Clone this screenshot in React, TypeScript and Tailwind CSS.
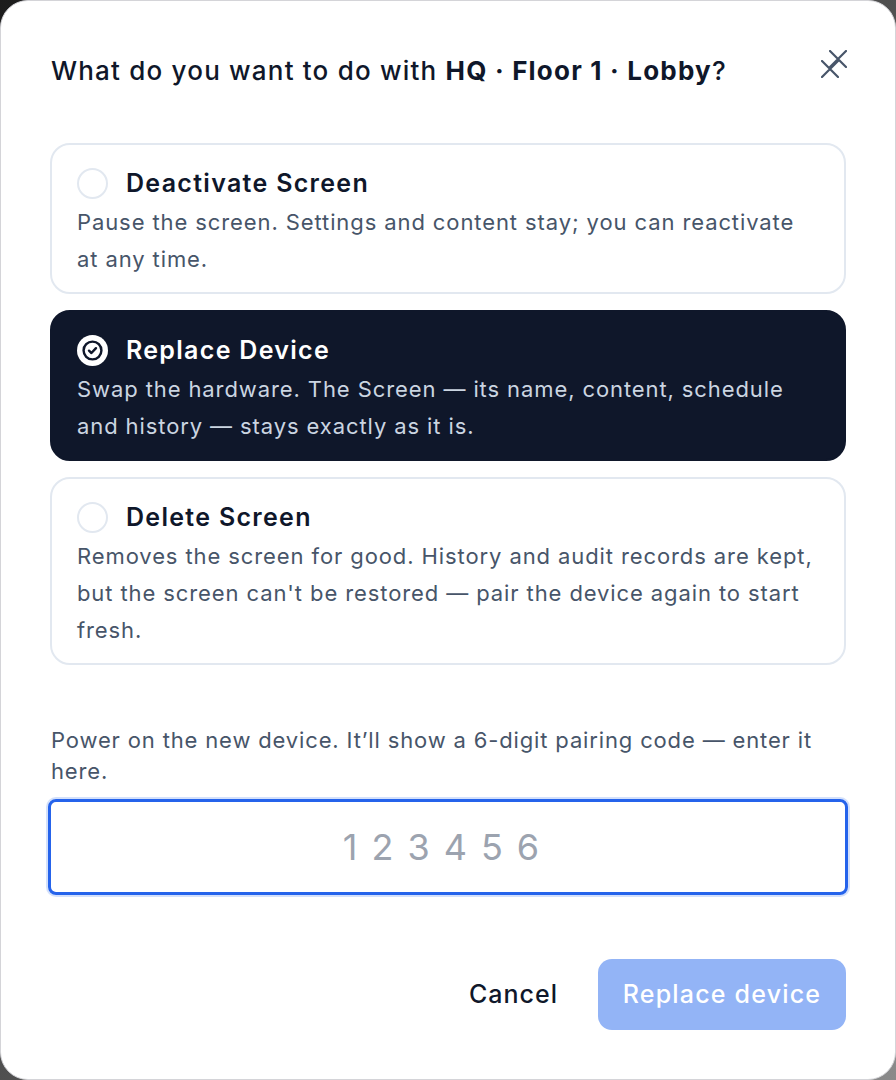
import { useState } from "react";

type Option = {
  id: string;
  title: string;
  description: string;
};

const options: Option[] = [
  {
    id: "deactivate",
    title: "Deactivate Screen",
    description:
      "Pause the screen. Settings and content stay; you can reactivate at any time.",
  },
  {
    id: "replace",
    title: "Replace Device",
    description:
      "Swap the hardware. The Screen — its name, content, schedule and history — stays exactly as it is.",
  },
  {
    id: "delete",
    title: "Delete Screen",
    description:
      "Removes the screen for good. History and audit records are kept, but the screen can't be restored — pair the device again to start fresh.",
  },
];

function CloseX({ className }: { className: string }) {
  return (
    <svg
      viewBox="0 0 18 18"
      className={className}
      fill="none"
      stroke="#475569"
      strokeWidth={2.2}
      strokeLinecap="round"
    >
      <path d="M1 1 17 17M17 1 1 17" />
    </svg>
  );
}

function CheckedRadio() {
  return (
    <svg viewBox="0 0 32 32" className="w-[31px] h-[31px] shrink-0">
      <circle cx="16" cy="16" r="16" fill="#ffffff" />
      <circle cx="16" cy="16" r="9.2" fill="none" stroke="#0f172a" strokeWidth="2.5" />
      <path
        d="M12.4 16.2 14.9 18.6 19.6 13.6"
        fill="none"
        stroke="#0f172a"
        strokeWidth="2.5"
        strokeLinecap="round"
        strokeLinejoin="round"
      />
    </svg>
  );
}

export default function App() {
  const [selected, setSelected] = useState("replace");
  const [code, setCode] = useState("");

  return (
    <div
      className="w-[896px] h-[1080px] bg-gradient-to-br from-[#1c1c1c] to-[#8a8a8a]"
      style={{ fontFamily: "Inter, 'Noto Sans', sans-serif" }}
    >
      <div className="w-full h-full bg-white rounded-[28px] border border-[#d4d4d8] flex flex-col px-[49px] pt-[50px]">
        {/* Header */}
        <div className="flex items-start justify-between">
          <h2 className="ml-[1px] text-[26px] leading-[40px] font-medium text-[#0f172a] tracking-[1.2px]">
            What do you want to do with{" "}
            <span className="font-bold">HQ · Floor 1 · Lobby</span>?
          </h2>
          <button className="relative w-[30px] h-[30px] mt-[-1px] mr-[-2px]">
            <CloseX className="absolute left-[3px] top-[10px] w-[18px] h-[18px]" />
            <CloseX className="absolute left-[11px] top-[0px] w-[18px] h-[18px]" />
          </button>
        </div>

        {/* Options */}
        <div className="mt-[52px] flex flex-col gap-[16px]">
          {options.map((opt) => {
            const active = selected === opt.id;
            return (
              <button
                key={opt.id}
                onClick={() => setSelected(opt.id)}
                className={`text-left rounded-[20px] px-[25px] pt-[20px] pb-[14px] border-2 ${
                  active
                    ? "bg-[#0f172a] border-[#0f172a]"
                    : "bg-white border-[#e2e8f0]"
                }`}
              >
                <div className="flex items-center gap-[18px]">
                  {active ? (
                    <CheckedRadio />
                  ) : (
                    <span className="w-[31px] h-[31px] rounded-full border-2 border-[#e2e8f0] shrink-0" />
                  )}
                  <span
                    className={`text-[25px] leading-[36px] font-semibold tracking-[1.3px] ${
                      active ? "text-white" : "text-[#0f172a]"
                    }`}
                  >
                    {opt.title}
                  </span>
                </div>
                <p
                  className={`mt-[3px] text-[22px] leading-[37px] tracking-[0.9px] ${
                    active ? "text-[#cbd5e1]" : "text-[#475569]"
                  }`}
                >
                  {opt.description}
                </p>
              </button>
            );
          })}
        </div>

        {/* Pairing code */}
        <p className="mt-[60px] ml-[1px] text-[22px] leading-[31px] tracking-[0.85px] text-[#475569]">
          Power on the new device. It’ll show a 6-digit pairing code — enter it
          here.
        </p>
        <input
          value={code}
          onChange={(e) => setCode(e.target.value)}
          placeholder="123456"
          inputMode="numeric"
          maxLength={6}
          className="mt-[12px] mx-[-2px] h-[96px] rounded-[8px] border-[3px] border-[#2563eb] ring-2 ring-[#2563eb]/20 outline-none text-center text-[36px] tracking-[14px] text-[#0f172a] placeholder:text-[#9ca3af]"
        />

        {/* Footer */}
        <div className="mt-[64px] flex items-center justify-end gap-[40px]">
          <button className="text-[25px] font-medium text-[#0f172a] tracking-[1px]">
            Cancel
          </button>
          <button
            disabled
            className="h-[71px] w-[248px] rounded-[14px] bg-[#93b4f6] text-white text-[25px] font-medium tracking-[1.2px]"
          >
            Replace device
          </button>
        </div>
      </div>
    </div>
  );
}
